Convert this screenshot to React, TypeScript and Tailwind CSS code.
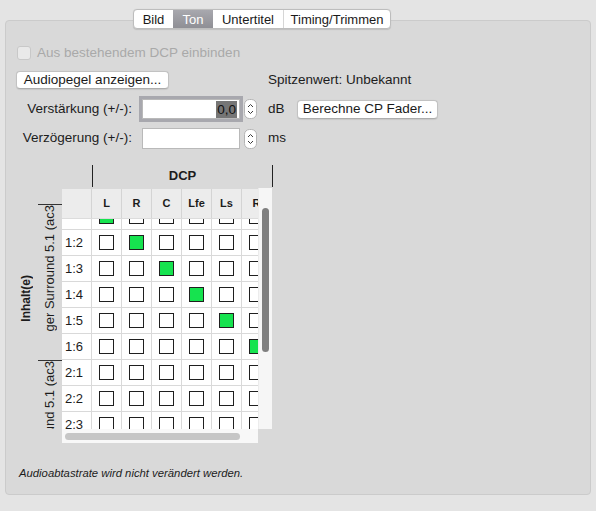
import React from 'react';

const channels = ['L', 'R', 'C', 'Lfe', 'Ls', 'R', 'HI', 'VI'];
const rows = ['1:1', '1:2', '1:3', '1:4', '1:5', '1:6', '2:1', '2:2', '2:3', '2:4'];

const Stepper = () => (
  <svg width="13" height="20" viewBox="0 0 13 20" className="shrink-0">
    <rect x="0.5" y="0.5" width="12" height="19" rx="5" fill="#fff" stroke="#b4b4b4" />
    <path d="M4 8 L6.5 5.5 L9 8" fill="none" stroke="#3a3a3a" strokeWidth="1" />
    <path d="M4 12 L6.5 14.5 L9 12" fill="none" stroke="#3a3a3a" strokeWidth="1" />
  </svg>
);

const Button = ({ children, className = '' }: { children: React.ReactNode; className?: string }) => (
  <div
    className={`flex items-center justify-center bg-white border border-[#c2c2c2] border-b-[#adadad] rounded-[4px] shadow-[0_0.5px_1px_rgba(0,0,0,0.08)] text-[13.5px] text-[#1a1a1a] ${className}`}
  >
    {children}
  </div>
);

export default function App() {
  const tabs = [
    { name: 'Bild', w: 'w-[39px]' },
    { name: 'Ton', w: 'w-[40px]', active: true },
    { name: 'Untertitel', w: 'w-[70px]' },
    { name: 'Timing/Trimmen', w: 'w-[107px]' },
  ];

  return (
    <div className="w-[596px] h-[511px] bg-[#e4e4e4] overflow-hidden font-['Liberation_Sans',Arial,sans-serif] text-[13.5px] text-[#1c1c1c]">
      {/* segmented tabs */}
      <div className="relative z-10 pt-[9px] pl-[133px] flex">
        <div className="flex h-[20px] bg-white border border-[#bdbdbd] rounded-[4px] overflow-hidden shadow-[0_0.5px_1px_rgba(0,0,0,0.12)] text-[13px]">
          {tabs.map((t, i) => (
            <div
              key={t.name}
              className={`${t.w} flex items-center justify-center leading-none ${
                t.active ? 'bg-gradient-to-b from-[#a8a8ae] to-[#8f8f95] text-white' : 'text-[#1a1a1a]'
              } ${i > 0 && !t.active && !tabs[i - 1].active ? 'border-l border-[#d6d6d6]' : ''}`}
            >
              {t.name}
            </div>
          ))}
        </div>
      </div>

      {/* panel */}
      <div className="mx-[5px] -mt-[9px] h-[475px] bg-[#d9d9d9] border border-[#cbcbcb] rounded-[4px] flex flex-col">
        {/* checkbox row */}
        <div className="mt-[25px] pl-[11px] flex items-center h-[14px]">
          <div className="w-[14px] h-[14px] rounded-[3px] border border-[#c8c8c8] bg-[#e9e9e9]" />
          <span className="ml-[6px] text-[#a9a9a9]">Aus bestehendem DCP einbinden</span>
        </div>

        {/* audio level row */}
        <div className="mt-[11px] pl-[10px] flex items-center h-[18px]">
          <div className="w-[252px]">
            <Button className="w-[153px] h-[18px]">Audiopegel anzeigen...</Button>
          </div>
          <span>Spitzenwert: Unbekannt</span>
        </div>

        {/* gain row */}
        <div className="mt-[10px] flex items-center h-[20px]">
          <div className="w-[126px] text-right">Verstärkung (+/-):</div>
          <div className="ml-[10px] w-[98px] h-[20px] bg-white border border-[#b9b9b9] shadow-[0_0_0_3px_rgba(128,128,138,0.55)] flex items-center justify-end pr-[2px]">
            <span className="bg-[#767676] text-[#111] px-[1px] leading-[17px]">0,0</span>
          </div>
          <div className="ml-[4px]">
            <Stepper />
          </div>
          <span className="ml-[11px] w-[29px]">dB</span>
          <Button className="w-[141px] h-[19px]">Berechne CP Fader...</Button>
        </div>

        {/* delay row */}
        <div className="mt-[9px] flex items-center h-[21px]">
          <div className="w-[126px] text-right">Verzögerung (+/-):</div>
          <div className="ml-[10px] w-[98px] h-[21px] bg-white border border-[#b9b9b9]" />
          <div className="ml-[4px]">
            <Stepper />
          </div>
          <span className="ml-[11px]">ms</span>
        </div>

        {/* DCP header */}
        <div className="mt-[16px] pl-[86px] flex">
          <div className="w-[181px] h-[22px] border-l border-r border-[#222] flex items-center justify-center font-bold text-[13px]">
            DCP
          </div>
        </div>

        {/* mapping area */}
        <div className="mt-[2px] flex">
          {/* Inhalt(e) */}
          <div className="w-[32px] pl-[14px] pt-[86px]">
            <div className="[writing-mode:vertical-rl] rotate-180 font-bold text-[12px] leading-[13px]">Inhalt(e)</div>
          </div>

          {/* groups */}
          <div className="w-[24px] h-[240px] pt-[15px] flex flex-col overflow-hidden text-[13px]">
            <div className="h-[156px] shrink-0 border-t border-[#333] overflow-hidden flex flex-col items-center">
              <div className="[writing-mode:vertical-rl] rotate-180 leading-[14px] whitespace-nowrap">ger Surround 5.1 (ac3</div>
            </div>
            <div className="flex-1 border-t border-[#333] overflow-hidden flex flex-col items-center">
              <div className="[writing-mode:vertical-rl] rotate-180 leading-[14px] whitespace-nowrap shrink-0">
                Surround 5.1 (ac3
              </div>
            </div>
          </div>

          {/* table */}
          <div className="flex flex-col w-[210px] text-[13px]">
            <div className="flex h-[240px]">
              <div className="w-[196px] bg-white overflow-hidden flex flex-col">
                <div className="h-[30px] shrink-0 bg-[#ececec] flex border-b border-[#dcdcdc] relative z-10">
                  <div className="w-[30px] shrink-0 border-r border-[#d4d4d4]" />
                  {channels.map((c, i) => (
                    <div
                      key={i}
                      className="w-[30px] shrink-0 border-r border-[#d4d4d4] flex items-center justify-center font-bold text-[11px]"
                    >
                      {c}
                    </div>
                  ))}
                </div>
                <div className="flex-1 overflow-hidden">
                  <div className="-mt-[15px]">
                    {rows.map((r, ri) => (
                      <div key={r} className="h-[26px] flex border-b border-[#d9d9d9]">
                        <div className="w-[30px] shrink-0 border-r border-[#d9d9d9] flex items-center pl-[3px]">
                          {ri > 0 ? r : ''}
                        </div>
                        {channels.map((c, ci) => (
                          <div key={ci} className="w-[30px] shrink-0 border-r border-[#d9d9d9] flex items-center justify-center">
                            <div
                              className={`w-[15px] h-[15px] border border-[#1f1f1f] ${
                                ri < 6 && ri === ci ? 'bg-[#16e34f]' : 'bg-white'
                              }`}
                            />
                          </div>
                        ))}
                      </div>
                    ))}
                  </div>
                </div>
              </div>
              <div className="w-[14px] bg-[#f6f6f6] border-l border-[#ececec] -mt-[1px]">
                <div className="mt-[20px] ml-[3px] w-[7px] h-[144px] rounded-full bg-[#7f7f7f]" />
              </div>
            </div>
            <div className="w-[196px] h-[14px] bg-[#f8f8f8] pt-[4px] pl-[3px]">
              <div className="w-[175px] h-[7px] rounded-full bg-[#c6c6c6]" />
            </div>
          </div>
        </div>

        {/* footer note */}
        <div className="mt-[23px] pl-[13px] italic text-[11.3px] leading-[14px] text-[#1c1c1c]">
          Audioabtastrate wird nicht verändert werden.
        </div>
      </div>
    </div>
  );
}
